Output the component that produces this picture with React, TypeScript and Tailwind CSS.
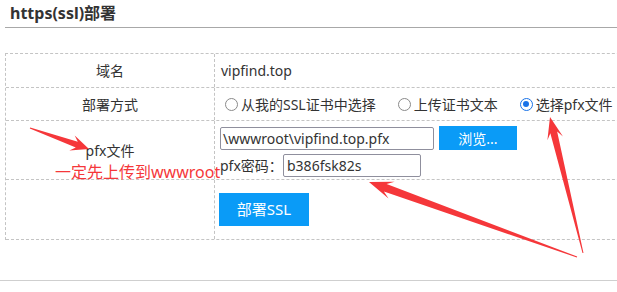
import React from "react";

type Pt = [number, number];

// screenshot annotation arrow: thin tail widening into a swept head
function arrowPoints(t: Pt, h: Pt, head = 20, neck = 3.5, barb = 9, tail = 0.6) {
  const dx = h[0] - t[0];
  const dy = h[1] - t[1];
  const len = Math.hypot(dx, dy);
  const ux = dx / len;
  const uy = dy / len;
  const nx = -uy;
  const ny = ux;
  const n: Pt = [h[0] - ux * head * 0.72, h[1] - uy * head * 0.72];
  const b: Pt = [h[0] - ux * head, h[1] - uy * head];
  const pts: Pt[] = [
    [t[0] + nx * tail, t[1] + ny * tail],
    [n[0] + nx * neck, n[1] + ny * neck],
    [b[0] + nx * barb, b[1] + ny * barb],
    h,
    [b[0] - nx * barb, b[1] - ny * barb],
    [n[0] - nx * neck, n[1] - ny * neck],
    [t[0] - nx * tail, t[1] - ny * tail],
  ];
  return pts.map((p) => p.join(",")).join(" ");
}

function Radio({ checked, label }: { checked?: boolean; label: string }) {
  return (
    <label className="flex items-center gap-[3px]">
      {checked ? (
        <span className="flex h-[13px] w-[13px] items-center justify-center rounded-full border-[1.5px] border-[#1a73e8] bg-white">
          <span className="h-[6px] w-[6px] rounded-full bg-[#1a73e8]" />
        </span>
      ) : (
        <span className="h-[13px] w-[13px] rounded-full border-[1.5px] border-[#8a8a8a] bg-white" />
      )}
      <span>{label}</span>
    </label>
  );
}

const cell = "border-b border-dashed border-[#c4c4c4]";
const left = "w-[209px] shrink-0 border-r border-dashed border-[#c4c4c4] flex items-center justify-center";

export default function App() {
  return (
    <div className="relative h-[292px] w-[617px] overflow-hidden bg-white font-['Noto_Sans','Noto_Sans_CJK_SC',sans-serif] text-[14px] text-[#333]">
      <div className="h-[27px] pl-[10px] pt-[2px] text-[16px] font-bold leading-[22px] text-[#333]">
        https(ssl)部署
      </div>
      <div className="ml-[5px] h-px bg-[#a8a8a8]" />

      <div className="ml-[5px] mt-[25px] w-[660px] border-l border-t border-dashed border-[#c4c4c4]">
        <div className={`flex h-[34px] ${cell}`}>
          <div className={left}>域名</div>
          <div className="flex items-center pl-[6px]">vipfind.top</div>
        </div>

        <div className={`flex h-[33px] ${cell}`}>
          <div className={left}>部署方式</div>
          <div className="flex items-center gap-[22px] pl-[10px]">
            <Radio label="从我的SSL证书中选择" />
            <Radio label="上传证书文本" />
            <Radio checked label="选择pfx文件" />
          </div>
        </div>

        <div className={`flex h-[59px] ${cell}`}>
          <div className={left}>pfx文件</div>
          <div className="flex flex-col gap-[4px] pl-[5px] pt-[5px]">
            <div className="flex items-center gap-[5px]">
              <div className="flex h-[23px] w-[214px] items-center rounded-[2px] border border-[#8f8f9d] px-[2px]">
                \wwwroot\vipfind.top.pfx
              </div>
              <button className="h-[24px] w-[78px] bg-[#0a9bf7] text-[14px] text-white">浏览...</button>
            </div>
            <div className="flex items-center">
              <span className="w-[63px]">pfx密码：</span>
              <div className="flex h-[23px] w-[138px] items-center rounded-[2px] border border-[#8f8f9d] px-[3px]">
                b386fsk82s
              </div>
            </div>
          </div>
        </div>

        <div className={`flex h-[60px] ${cell}`}>
          <div className={left} />
          <div className="pl-[4px] pt-[13px]">
            <button className="h-[33px] w-[90px] bg-[#0a9bf7] text-[15px] text-white">部署SSL</button>
          </div>
        </div>
      </div>

      <div className="mt-[40px] h-px bg-[#cfcfcf]" />

      <div className="absolute left-[55px] top-[161px] text-[16px] leading-[22px] text-[#f5373a]">
        一定先上传到wwwroot
      </div>

      <svg className="pointer-events-none absolute inset-0" width="617" height="292" viewBox="0 0 617 292">
        <polygon points={arrowPoints([30, 128], [89, 149], 18, 3, 8, 0.6)} fill="#f5373a" />
        <polygon points={arrowPoints([583, 253], [550, 117], 22, 3.5, 8, 0.5)} fill="#f5373a" />
        <polygon points={arrowPoints([577, 257], [369, 182], 24, 4, 9, 0.5)} fill="#f5373a" />
      </svg>
    </div>
  );
}
